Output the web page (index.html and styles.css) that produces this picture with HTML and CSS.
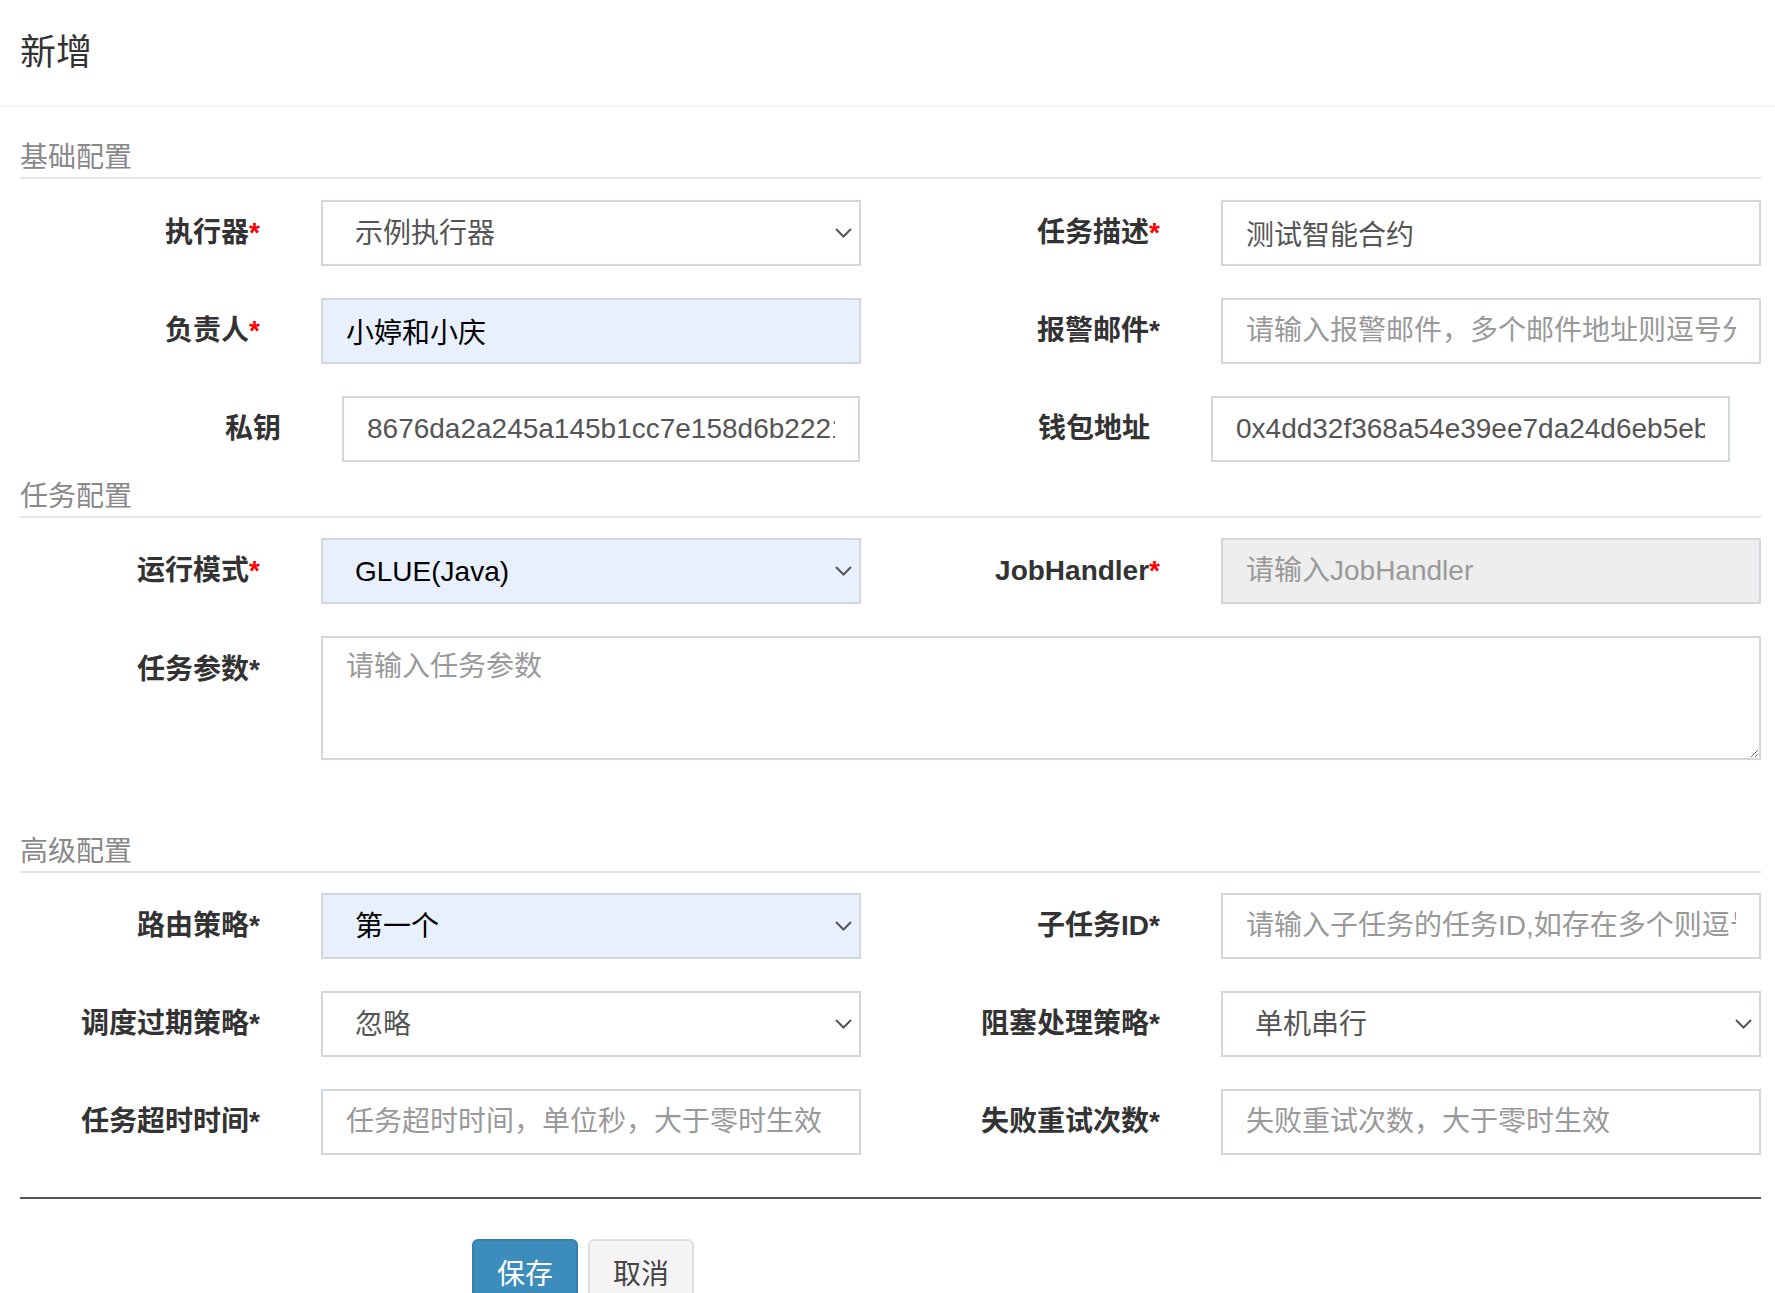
FILE: index.html
```html
<!DOCTYPE html>
<html lang="zh-CN">
<head>
<meta charset="utf-8">
<title>新增</title>
<link rel="stylesheet" href="styles.css">
</head>
<body>
<div class="modal">
  <div class="modal-header">
    <h4 class="modal-title">新增</h4>
  </div>
  <form class="form">
    <div class="section-title first">基础配置</div>

    <div class="row">
      <label class="label">执行器<span class="req">*</span></label>
      <div class="select-wrap">
        <select class="control select"><option>示例执行器</option></select>
        <svg class="chev" width="17" height="10" viewBox="0 0 17 10"><polyline points="1,1 8.5,8.5 16,1" fill="none" stroke="#555" stroke-width="2"/></svg>
      </div>
      <label class="label">任务描述<span class="req">*</span></label>
      <input class="control" type="text" value="测试智能合约">
    </div>

    <div class="row">
      <label class="label">负责人<span class="req">*</span></label>
      <input class="control filled" type="text" value="小婷和小庆">
      <label class="label">报警邮件<span class="star">*</span></label>
      <input class="control" type="text" placeholder="请输入报警邮件，多个邮件地址则逗号分隔">
    </div>

    <div class="row row-key">
      <label class="label">私钥</label>
      <input class="control" type="text" value="8676da2a245a145b1cc7e158d6b22217f0a3c9e4b8d1f265">
      <label class="label">钱包地址</label>
      <input class="control" type="text" value="0x4dd32f368a54e39ee7da24d6eb5eb3a91c72">
    </div>

    <div class="section-title second">任务配置</div>

    <div class="row">
      <label class="label">运行模式<span class="req">*</span></label>
      <div class="select-wrap">
        <select class="control select filled"><option>GLUE(Java)</option></select>
        <svg class="chev" width="17" height="10" viewBox="0 0 17 10"><polyline points="1,1 8.5,8.5 16,1" fill="none" stroke="#555" stroke-width="2"/></svg>
      </div>
      <label class="label">JobHandler<span class="req">*</span></label>
      <input class="control readonly" type="text" placeholder="请输入JobHandler" readonly>
    </div>

    <div class="row row-area">
      <label class="label label-top">任务参数<span class="star">*</span></label>
      <textarea class="control area" placeholder="请输入任务参数"></textarea>
    </div>

    <div class="section-title third">高级配置</div>

    <div class="row">
      <label class="label">路由策略<span class="star">*</span></label>
      <div class="select-wrap">
        <select class="control select filled"><option>第一个</option></select>
        <svg class="chev" width="17" height="10" viewBox="0 0 17 10"><polyline points="1,1 8.5,8.5 16,1" fill="none" stroke="#555" stroke-width="2"/></svg>
      </div>
      <label class="label">子任务ID<span class="star">*</span></label>
      <input class="control" type="text" placeholder="请输入子任务的任务ID,如存在多个则逗号分隔">
    </div>

    <div class="row">
      <label class="label">调度过期策略<span class="star">*</span></label>
      <div class="select-wrap">
        <select class="control select"><option>忽略</option></select>
        <svg class="chev" width="17" height="10" viewBox="0 0 17 10"><polyline points="1,1 8.5,8.5 16,1" fill="none" stroke="#555" stroke-width="2"/></svg>
      </div>
      <label class="label">阻塞处理策略<span class="star">*</span></label>
      <div class="select-wrap">
        <select class="control select"><option>单机串行</option></select>
        <svg class="chev" width="17" height="10" viewBox="0 0 17 10"><polyline points="1,1 8.5,8.5 16,1" fill="none" stroke="#555" stroke-width="2"/></svg>
      </div>
    </div>

    <div class="row last">
      <label class="label">任务超时时间<span class="star">*</span></label>
      <input class="control" type="text" placeholder="任务超时时间，单位秒，大于零时生效">
      <label class="label">失败重试次数<span class="star">*</span></label>
      <input class="control" type="text" placeholder="失败重试次数，大于零时生效">
    </div>

    <hr class="divider">

    <div class="actions">
      <button type="button" class="btn btn-primary">保存</button>
      <button type="button" class="btn btn-default">取消</button>
    </div>
  </form>
</div>
</body>
</html>
```

FILE: styles.css
```css
* {
  box-sizing: border-box;
}

html, body {
  margin: 0;
  padding: 0;
  background: #fff;
  overflow: hidden;
}

body {
  font-family: "Liberation Sans", "Noto Sans CJK SC", sans-serif;
  color: #333;
  width: 1775px;
  height: 1293px;
}

.modal-header {
  height: 107px;
  padding: 0 20px;
  display: flex;
  align-items: center;
  border-bottom: 2px solid #f4f4f4;
}

.modal-title {
  margin: 0;
  font-size: 36px;
  line-height: 1.2;
  font-weight: normal;
  color: #333;
}

.form {
  margin: 0 14px 0 20px;
  display: flex;
  flex-direction: column;
}

.section-title {
  font-size: 28px;
  line-height: 36px;
  color: #888;
  padding-bottom: 1px;
  border-bottom: 2px solid #e5e5e5;
}

.section-title.first {
  margin: 33px 0 21px;
}

.section-title.second {
  margin: 17px 0 20px;
}

.section-title.third {
  margin: 74px 0 20px;
}

.row {
  display: grid;
  grid-template-columns: 240px 540px 238px 540px;
  column-gap: 61px;
  align-items: center;
  height: 66px;
  margin-bottom: 32px;
}

.row.row-key {
  grid-template-columns: 261px 518px 229px 519px;
  margin-bottom: 0;
}

.row.row-area {
  grid-template-columns: 240px 1440px;
  align-items: start;
  height: 124px;
  margin: 0;
}

.row.last {
  margin-bottom: 0;
}

.label {
  text-align: right;
  font-size: 28px;
  line-height: 38px;
  font-weight: 700;
  color: #333;
  white-space: nowrap;
}

.label-top {
  padding-top: 15px;
}

.req {
  color: #f00;
}

.star {
  color: #333;
}

.control {
  display: block;
  width: 100%;
  height: 66px;
  margin: 0;
  padding: 0 23px;
  border: 2px solid #d2d6de;
  border-radius: 0;
  background: #fff;
  font-family: "Liberation Sans", "Noto Sans CJK SC", sans-serif;
  font-size: 28px;
  color: #555;
  outline: none;
  box-shadow: none;
}

.control::placeholder {
  color: #999;
  opacity: 1;
}

.control.filled {
  background: #e8f0fe;
  color: #000;
}

.control.readonly {
  background: #eee;
}

.select-wrap {
  position: relative;
  width: 100%;
}

.select {
  -webkit-appearance: none;
  appearance: none;
  padding-left: 32px;
  padding-right: 50px;
}

.chev {
  position: absolute;
  right: 9px;
  top: 28px;
  pointer-events: none;
}

.area {
  height: 124px;
  padding: 11px 23px 8px;
  line-height: 36px;
  resize: vertical;
}

.divider {
  margin: 42px 0 0;
  border: 0;
  border-top: 2px solid #555;
  height: 0;
}

.actions {
  display: flex;
  gap: 10px;
  margin: 40px 0 0 452px;
}

.btn {
  height: 66px;
  width: 106px;
  padding: 0;
  font-family: "Liberation Sans", "Noto Sans CJK SC", sans-serif;
  font-size: 28px;
  border-radius: 6px;
  border: 2px solid transparent;
}

.btn-primary {
  background: #3c8dbc;
  border-color: #367fa9;
  color: #fff;
}

.btn-default {
  background: #f4f4f4;
  border-color: #ddd;
  color: #444;
}
```
